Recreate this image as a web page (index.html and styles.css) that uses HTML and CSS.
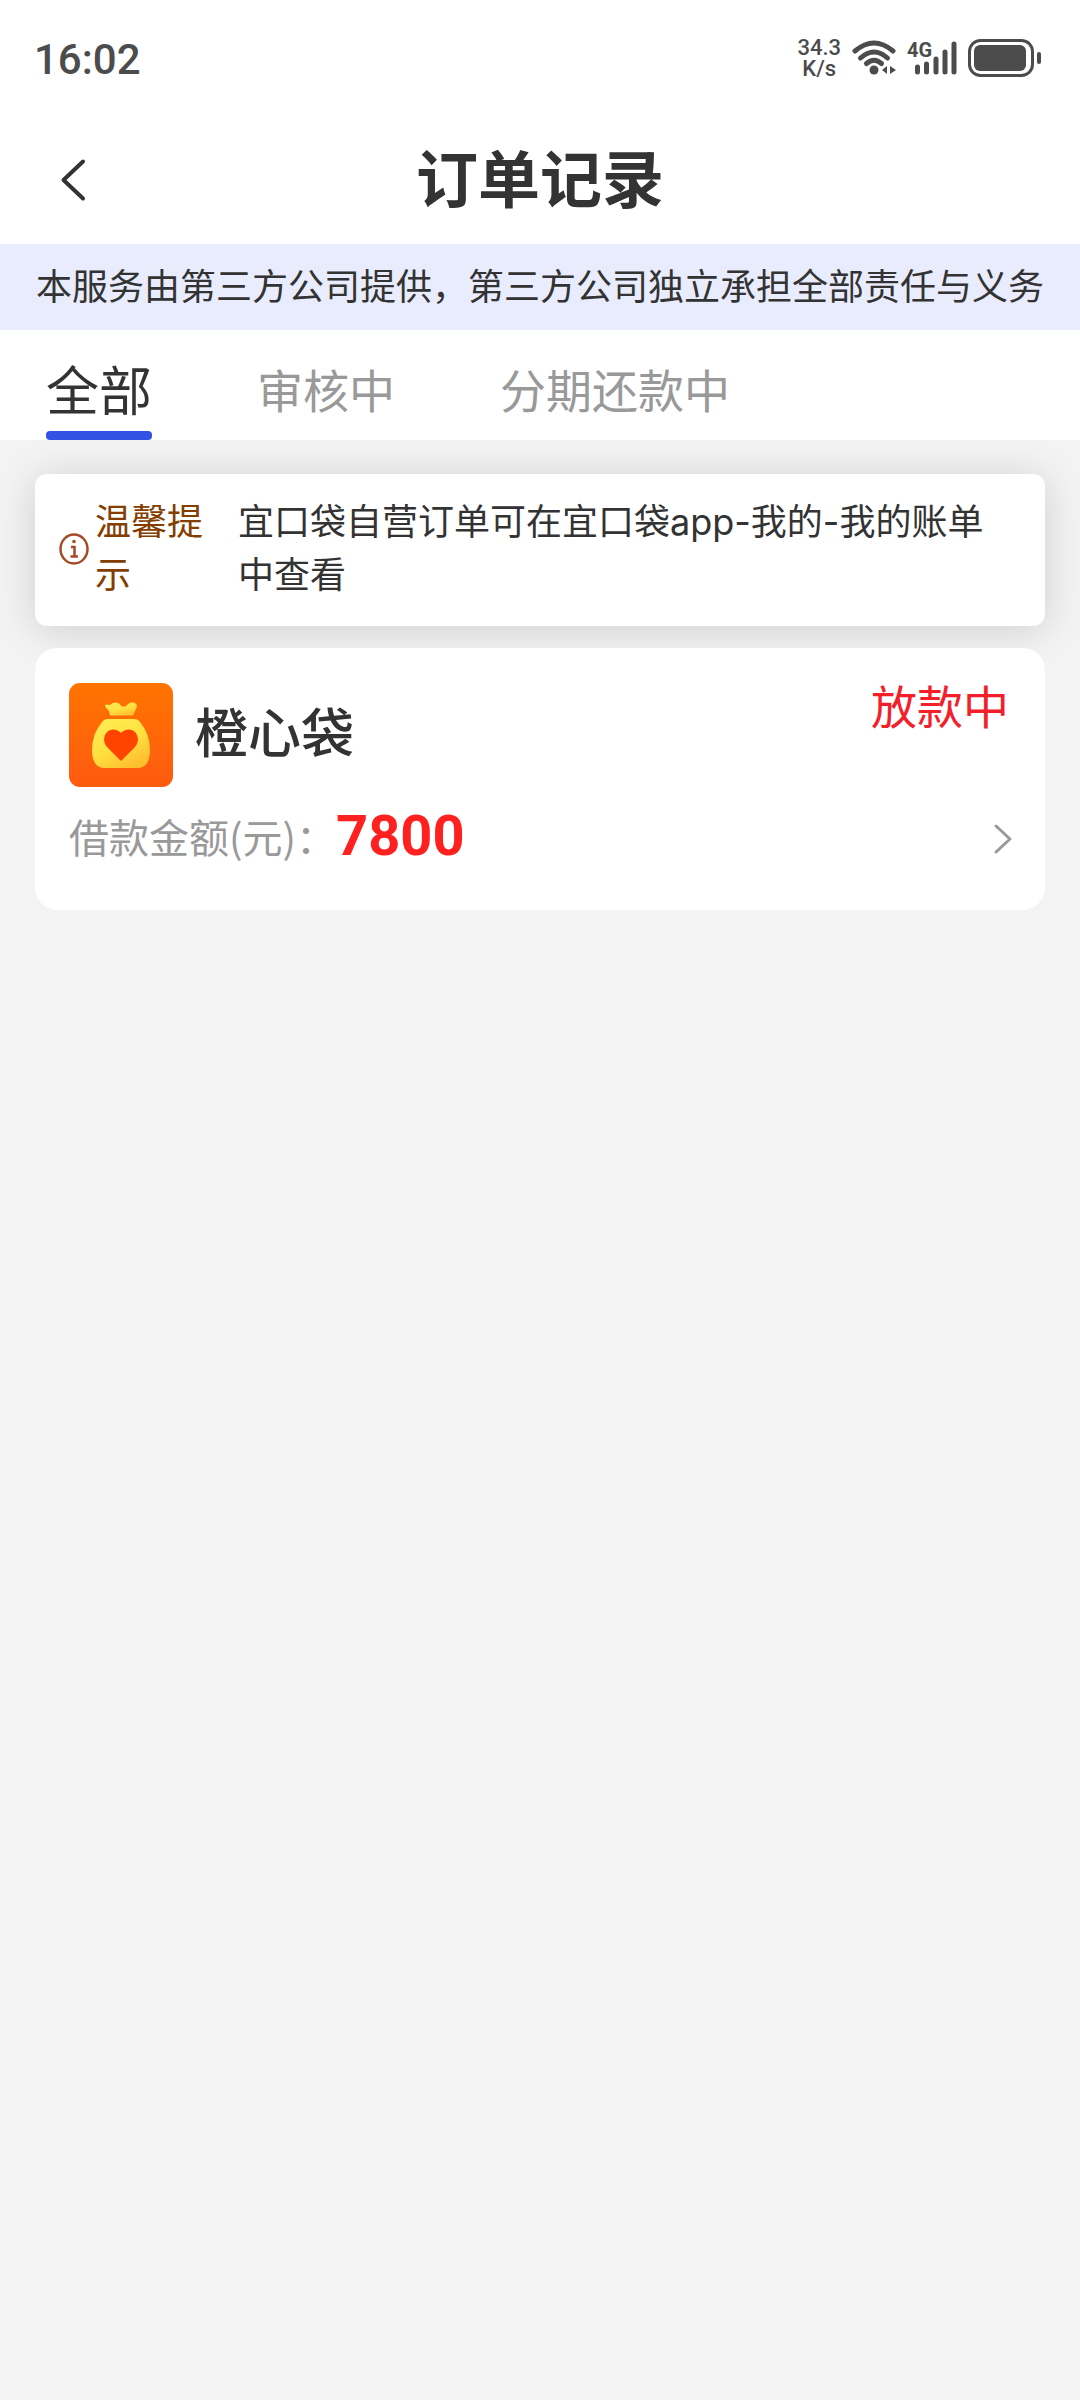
FILE: index.html
```html
<!DOCTYPE html>
<html lang="zh-CN">
<head>
<meta charset="utf-8">
<meta name="viewport" content="width=device-width, initial-scale=1">
<title>订单记录</title>
<link rel="stylesheet" href="styles.css">
</head>
<body>
<div class="status-bar">
  <time class="clock">16:02</time>
  <div class="status-icons">
    <div class="net-speed"><span>34.3</span><span>K/s</span></div>
    <svg class="wifi" width="44" height="36" viewBox="0 0 44 36" aria-hidden="true">
      <g fill="none" stroke="currentColor" stroke-width="5" stroke-linecap="round">
        <path d="M3 11Q22 -5 41 11"/>
        <path d="M8.500 18Q22 6 35.500 18"/>
        <path d="M14.500 23.500Q22 17 29.500 23.500"/>
      </g>
      <circle cx="22" cy="30" r="4.500" fill="currentColor"/>
      <path d="M35 26v8l-5-4zM38 26v8l6-4z" fill="currentColor"/>
    </svg>
    <div class="cellular">
      <svg width="44" height="36" viewBox="0 0 44 36" aria-hidden="true">
        <g stroke="currentColor" stroke-width="5" stroke-linecap="round">
          <path d="M4.500 27v5M13.500 24v8M23 19v13M32 12v20M41 4v28"/>
        </g>
      </svg>
      <span class="network">4G</span>
    </div>
    <svg class="battery" width="74" height="38" viewBox="0 0 74 38" aria-hidden="true">
      <rect x="1.500" y="1.500" width="63" height="35" rx="11" fill="none" stroke="currentColor" stroke-width="3"/>
      <rect x="6" y="6" width="52" height="26" rx="6" fill="currentColor"/>
      <rect x="69" y="13" width="4" height="12" rx="2" fill="currentColor"/>
    </svg>
  </div>
</div>

<header class="nav">
  <button class="back" type="button" aria-label="返回">
    <svg width="26" height="44" viewBox="0 0 26 44" aria-hidden="true">
      <path d="M23 3.500L3.500 22L23 40.500" fill="none" stroke="currentColor" stroke-width="4" stroke-linecap="round" stroke-linejoin="round"/>
    </svg>
  </button>
  <h1 class="title">订单记录</h1>
</header>

<p class="disclaimer">本服务由第三方公司提供，第三方公司独立承担全部责任与义务</p>

<nav class="tabs">
  <button class="tab tab-active" type="button">全部</button>
  <button class="tab" type="button">审核中</button>
  <button class="tab" type="button">分期还款中</button>
</nav>

<main class="content">
  <section class="notice">
    <svg class="notice-icon" width="30" height="32" viewBox="0 0 30 32" aria-hidden="true">
      <ellipse cx="15" cy="16" rx="13.500" ry="14.500" fill="none" stroke="currentColor" stroke-width="2.500"/>
      <path d="M12 14h3.500v9M11.500 23.500h7.500" fill="none" stroke="currentColor" stroke-width="2.500"/>
      <circle cx="15" cy="8.500" r="1.800" fill="currentColor"/>
    </svg>
    <strong class="notice-label">温馨提示</strong>
    <p class="notice-text">宜口袋自营订单可在宜口袋app-我的-我的账单中查看</p>
  </section>

  <article class="order">
    <div class="order-head">
      <svg class="logo" width="104" height="104" viewBox="0 0 104 104" aria-hidden="true">
        <defs>
          <linearGradient id="tile" x1="0" y1="0" x2="0" y2="1"><stop offset="0" stop-color="#ff7400"/><stop offset="1" stop-color="#ff5a10"/></linearGradient>
          <linearGradient id="bag" x1="0" y1="0" x2="0.600" y2="1"><stop offset="0" stop-color="#ffee55"/><stop offset="0.600" stop-color="#ffe03f"/><stop offset="1" stop-color="#ffc030"/></linearGradient>
        </defs>
        <rect width="104" height="104" rx="11" fill="url(#tile)"/>
        <path d="M41 32.500L40 28Q36 24 36 22.500Q36.500 21 41 22Q46 18 50 20.500Q54 26 58 22Q61 18.500 65 19.500Q69 21 67.500 25L64 32.500Z" fill="url(#bag)"/>
        <path d="M39 36H65Q69 36 71 39Q81 51 81 67Q81 85 68 85H36Q23 85 23 67Q23 51 33 39Q35 36 39 36Z" fill="url(#bag)"/>
        <path d="M52 78L39 65Q35 61 35 56Q36 47 44 46.500Q49 46.500 52 50Q55 46.500 60 46.500Q68 47 69 56Q69 61 65 65Z" fill="#ff4400"/>
      </svg>
      <h2 class="order-name">橙心袋</h2>
      <span class="order-status">放款中</span>
    </div>
    <div class="order-row">
      <span class="amount-label">借款金额(元)：</span>
      <span class="amount">7800</span>
      <a class="detail" href="#" aria-label="查看订单">
        <svg width="20" height="32" viewBox="0 0 20 32" aria-hidden="true">
          <path d="M3 3L17 16L3 29" fill="none" stroke="currentColor" stroke-width="3" stroke-linecap="round" stroke-linejoin="round"/>
        </svg>
      </a>
    </div>
  </article>
</main>
</body>
</html>
```
FILE: styles.css
```css
* {
  box-sizing: border-box;
}

body {
  margin: 0;
  min-height: 100vh;
  background: #f3f3f3;
  color: #333;
  font-family: "Noto Sans CJK SC", sans-serif;
}

h1,
h2,
p {
  margin: 0;
}

button {
  padding: 0;
  border: 0;
  background: none;
  color: inherit;
  font: inherit;
}

svg {
  display: block;
}

/* Status bar */
.status-bar {
  display: flex;
  align-items: center;
  justify-content: space-between;
  height: 116px;
  padding: 0 38px 0 34px;
  background: #fff;
  color: #4c4c4c;
  font-family: Roboto, sans-serif;
}

.clock {
  padding-top: 2px;
  font-size: 42px;
  font-weight: 500;
}

.status-icons {
  display: flex;
  align-items: center;
  gap: 11px;
}

.net-speed {
  display: flex;
  flex-direction: column;
  align-items: center;
  font-size: 22px;
  font-weight: 500;
  line-height: 21px;
}

.cellular {
  position: relative;
  padding-left: 6px;
}

.network {
  position: absolute;
  top: 0;
  left: 0;
  font-size: 20px;
  font-weight: 700;
  line-height: 20px;
}

/* Page header */
.nav {
  display: grid;
  grid-template-columns: 60px 1fr 60px;
  align-items: center;
  height: 128px;
  padding: 0 60px;
  background: #fff;
}

.title {
  padding-bottom: 8px;
  font-size: 62px;
  font-weight: 700;
  line-height: 88px;
  text-align: center;
}

.disclaimer {
  padding: 14px 0 20px;
  background: #e9ecfc;
  font-size: 36px;
  line-height: 52px;
  text-align: center;
  white-space: nowrap;
}

/* Tabs */
.tabs {
  position: relative;
  display: flex;
  gap: 105px;
  height: 110px;
  padding: 0 46px;
  background: #fff;
}

.tab {
  padding-top: 14px;
  border-bottom: 9px solid transparent;
  color: #999;
  font-size: 46px;
}

.tab-active {
  position: relative;
  color: #333;
  font-size: 53px;
}

.tab-active::after {
  content: "";
  position: absolute;
  right: 0;
  bottom: -9px;
  left: 0;
  height: 9px;
  border-radius: 4px;
  background: #3352e4;
}

.content {
  display: flex;
  flex-direction: column;
  gap: 22px;
  padding: 34px 35px;
}

/* Notice */
.notice {
  display: flex;
  align-items: center;
  padding: 22px 42px 24px 24px;
  border-radius: 12px;
  background: #fff;
  box-shadow: 0 4px 40px rgba(0, 0, 0, 0.15);
  font-family: Inter, "Noto Sans CJK SC", sans-serif;
  font-size: 36px;
  line-height: 53px;
}

.notice-icon {
  flex: none;
  margin-right: 6px;
  color: #a44a26;
}

.notice-label {
  flex: none;
  width: 110px;
  margin-right: 33px;
  color: #843e00;
  font-weight: 400;
}

.notice-text {
  flex: 1;
}

/* Order card */
.order {
  position: relative;
  padding: 35px 32px 36px 34px;
  border-radius: 22px;
  background: #fff;
}

.order-head {
  display: flex;
  align-items: center;
}

.order-name {
  flex: 1;
  margin-left: 22px;
  padding-bottom: 10px;
  font-size: 53px;
  font-weight: 500;
  line-height: 76px;
}

.order-status {
  align-self: flex-start;
  padding-right: 4px;
  color: #f3202a;
  font-size: 46px;
  line-height: 42px;
}

.order-row {
  display: flex;
  align-items: center;
  height: 87px;
  padding-top: 16px;
}

.amount-label {
  padding-bottom: 6px;
  color: #999;
  font-size: 40px;
}

.amount {
  flex: 1;
  padding-bottom: 6px;
  color: #ff2020;
  font-family: Roboto, sans-serif;
  font-size: 56px;
  font-weight: 700;
  line-height: 64px;
}

.detail {
  color: #999;
}
```
